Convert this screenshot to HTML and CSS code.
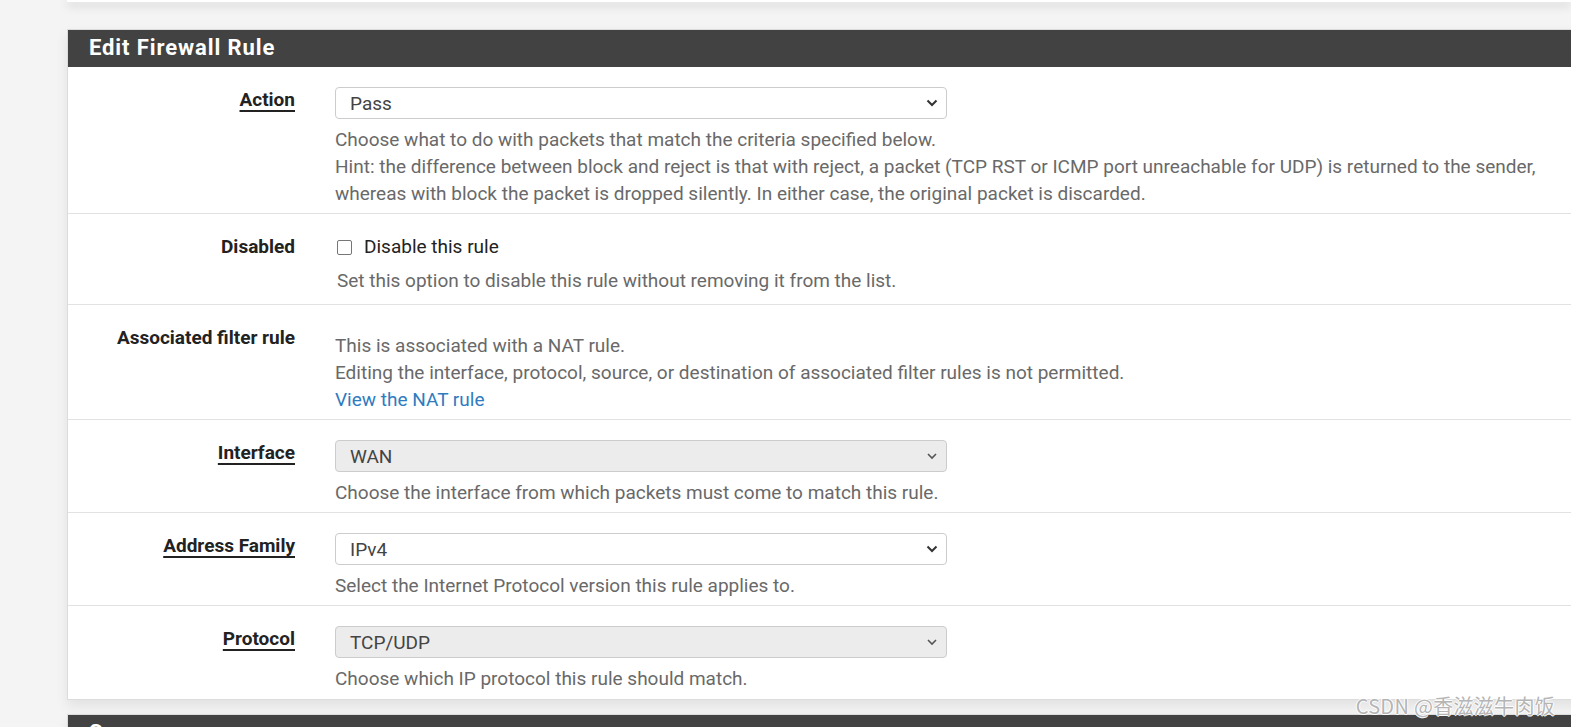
FILE: index.html
```html
<!DOCTYPE html>
<html>
<head>
<meta charset="utf-8">
<link rel="stylesheet" href="styles.css">
</head>
<body>
<div class="topbox"></div>
<div class="page">
  <div class="panel">
    <div class="panel-heading">Edit Firewall Rule</div>
    <div class="row">
      <div class="label"><span class="ul">Action</span></div>
      <div class="control">
        <div class="select">
          <span>Pass</span>
          <svg class="chev" width="12" height="8" viewBox="0 0 12 8"><path d="M1.5 1.5 L6 6 L10.5 1.5" fill="none" stroke="#333" stroke-width="2"/></svg>
        </div>
        <div class="help">Choose what to do with packets that match the criteria specified below.<br>Hint: the difference between block and reject is that with reject, a packet (TCP RST or ICMP port unreachable for UDP) is returned to the sender, whereas with block the packet is dropped silently. In either case, the original packet is discarded.</div>
      </div>
    </div>
    <div class="row row-check">
      <div class="label">Disabled</div>
      <div class="control">
        <label class="check"><span class="box"></span>Disable this rule</label>
        <div class="help help-check">Set this option to disable this rule without removing it from the list.</div>
      </div>
    </div>
    <div class="row">
      <div class="label">Associated filter rule</div>
      <div class="control">
        <div class="static">This is associated with a NAT rule.<br>Editing the interface, protocol, source, or destination of associated filter rules is not permitted.<br><a href="#">View the NAT rule</a></div>
      </div>
    </div>
    <div class="row">
      <div class="label"><span class="ul">Interface</span></div>
      <div class="control">
        <div class="select disabled">
          <span>WAN</span>
          <svg class="chev" width="12" height="8" viewBox="0 0 12 8"><path d="M2 2 L6 6 L10 2" fill="none" stroke="#555" stroke-width="1.6"/></svg>
        </div>
        <div class="help">Choose the interface from which packets must come to match this rule.</div>
      </div>
    </div>
    <div class="row">
      <div class="label"><span class="ul">Address Family</span></div>
      <div class="control">
        <div class="select">
          <span>IPv4</span>
          <svg class="chev" width="12" height="8" viewBox="0 0 12 8"><path d="M1.5 1.5 L6 6 L10.5 1.5" fill="none" stroke="#333" stroke-width="2"/></svg>
        </div>
        <div class="help">Select the Internet Protocol version this rule applies to.</div>
      </div>
    </div>
    <div class="row row-last">
      <div class="label"><span class="ul">Protocol</span></div>
      <div class="control">
        <div class="select disabled">
          <span>TCP/UDP</span>
          <svg class="chev" width="12" height="8" viewBox="0 0 12 8"><path d="M2 2 L6 6 L10 2" fill="none" stroke="#555" stroke-width="1.6"/></svg>
        </div>
        <div class="help">Choose which IP protocol this rule should match.</div>
      </div>
    </div>
  </div>
  <div class="panel panel-next">
    <div class="panel-heading">Source</div>
  </div>
</div>
<div class="watermark">CSDN @香滋滋牛肉饭</div>
</body>
</html>
```
FILE: styles.css
```css
html, body {
  margin: 0;
  padding: 0;
}
body {
  background: #f4f4f4;
  font-family: Roboto, "Noto Sans", "Liberation Sans", sans-serif;
  font-size: 19px;
  color: #222;
  overflow: hidden;
  height: 727px;
}
.topbox {
  margin-left: 67px;
  height: 2px;
  background: #fff;
  box-shadow: 0 3px 10px rgba(0, 0, 0, 0.3);
}
.page {
  padding-left: 67px;
  padding-top: 27px;
}
.panel {
  width: 1530px;
  background: #fff;
  border: 1px solid #dcdcdc;
  border-right: none;
  box-shadow: 0 6px 12px rgba(0, 0, 0, 0.08);
}
.panel-heading {
  background: #424242;
  color: #fff;
  font-weight: 700;
  font-size: 22px;
  letter-spacing: 0.9px;
  height: 37px;
  line-height: 36px;
  padding-left: 21px;
}
.row {
  display: grid;
  grid-template-columns: 227px 1fr;
  column-gap: 40px;
  padding: 20px 0 6px 0;
  border-bottom: 1px solid #e2e2e2;
}
.row-last {
  border-bottom: none;
  padding-bottom: 7px;
}
.label {
  text-align: right;
  font-weight: 700;
  line-height: 26px;
  color: #222;
}
.ul {
  text-decoration: underline;
  text-decoration-thickness: 2px;
  text-underline-offset: 4px;
}
.control {
  min-width: 0;
}
.select {
  width: 596px;
  height: 30px;
  border: 1px solid #cccccc;
  border-radius: 4px;
  background: #fff;
  display: flex;
  align-items: center;
  justify-content: space-between;
  padding: 0 0 0 14px;
  color: #444;
}
.select.disabled {
  background: #ececec;
}
.chev {
  margin-right: 8px;
}
.help {
  margin-top: 7px;
  line-height: 27px;
  color: #696969;
  padding-right: 30px;
}
.row-check {
  padding-bottom: 10px;
}
.check {
  display: flex;
  align-items: center;
  line-height: 26px;
  color: #222;
  padding-left: 2px;
}
.box {
  width: 13px;
  height: 13px;
  border: 1px solid #767676;
  border-radius: 2px;
  margin-right: 12px;
  background: #fff;
}
.help-check {
  padding-left: 2px;
}
.static {
  margin-top: 7px;
  line-height: 27px;
  color: #696969;
}
.static a {
  color: #2f7bbf;
  text-decoration: none;
}
.panel-next {
  margin-top: 14px;
  border-bottom: none;
}
.watermark {
  position: absolute;
  right: 16px;
  top: 691px;
  font-family: "Noto Sans CJK SC", "Liberation Sans", sans-serif;
  font-size: 20px;
  letter-spacing: 0.3px;
  color: #b5b5b5;
  text-shadow: -1px 0 #fff, 1px 0 #fff, 0 -1px #fff, 0 1px #fff;
}
```
